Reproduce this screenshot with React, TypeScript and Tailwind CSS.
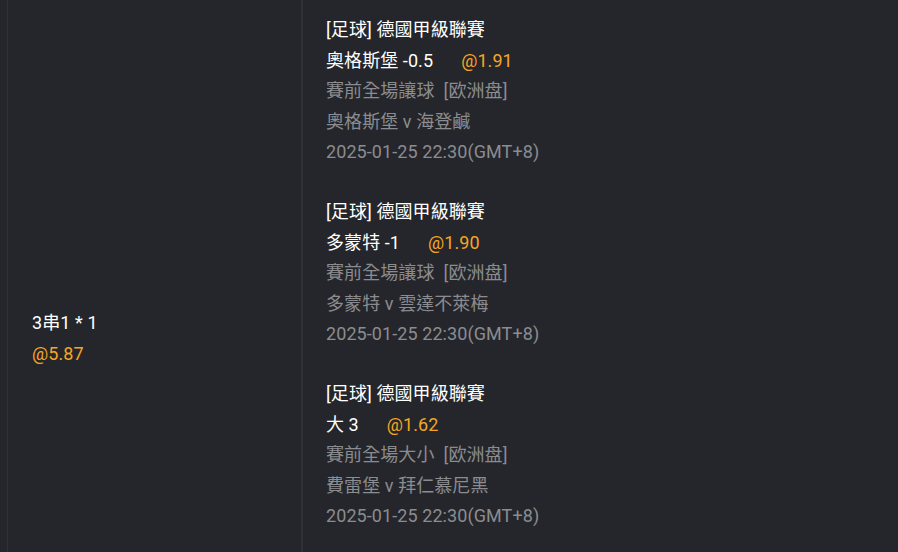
const bets = [
  {
    league: "[足球] 德國甲級聯賽",
    pick: "奧格斯堡 -0.5",
    odds: "@1.91",
    market: "賽前全場讓球\u00a0 [欧洲盘]",
    match: "奧格斯堡 v 海登鹹",
    time: "2025-01-25 22:30(GMT+8)",
  },
  {
    league: "[足球] 德國甲級聯賽",
    pick: "多蒙特 -1",
    odds: "@1.90",
    market: "賽前全場讓球\u00a0 [欧洲盘]",
    match: "多蒙特 v 雲達不萊梅",
    time: "2025-01-25 22:30(GMT+8)",
  },
  {
    league: "[足球] 德國甲級聯賽",
    pick: "大 3",
    odds: "@1.62",
    market: "賽前全場大小\u00a0 [欧洲盘]",
    match: "費雷堡 v 拜仁慕尼黑",
    time: "2025-01-25 22:30(GMT+8)",
  },
];

export default function App() {
  return (
    <div
      className="h-[552px] w-[898px] overflow-hidden bg-[#25262b] text-[18px] leading-[30.6px] tracking-[0.08px]"
      style={{ fontFamily: 'Roboto, "Noto Sans CJK TC", sans-serif' }}
    >
      <div className="flex h-[677px] pl-[7px]">
        {/* 串關 */}
        <div className="flex w-[295px] flex-col justify-center border-x border-[#303136] px-6">
          <div className="text-white">3串1 * 1</div>
          <div className="text-[#f5a524]">@5.87</div>
        </div>

        {/* 注單明細 */}
        <div className="flex-1 border-l border-[#303136] pl-[23px] pt-[15px]">
          {bets.map((b, i) => (
            <div key={i} className="mb-[29px]">
              <div className="text-white">{b.league}</div>
              <div className="text-white">
                {b.pick}
                <span className="ml-7 text-[#f5a524]">{b.odds}</span>
              </div>
              <div className="text-[#8b8c90]">{b.market}</div>
              <div className="text-[#8b8c90]">{b.match}</div>
              <div className="text-[#8b8c90]">{b.time}</div>
            </div>
          ))}
        </div>
      </div>
    </div>
  );
}
